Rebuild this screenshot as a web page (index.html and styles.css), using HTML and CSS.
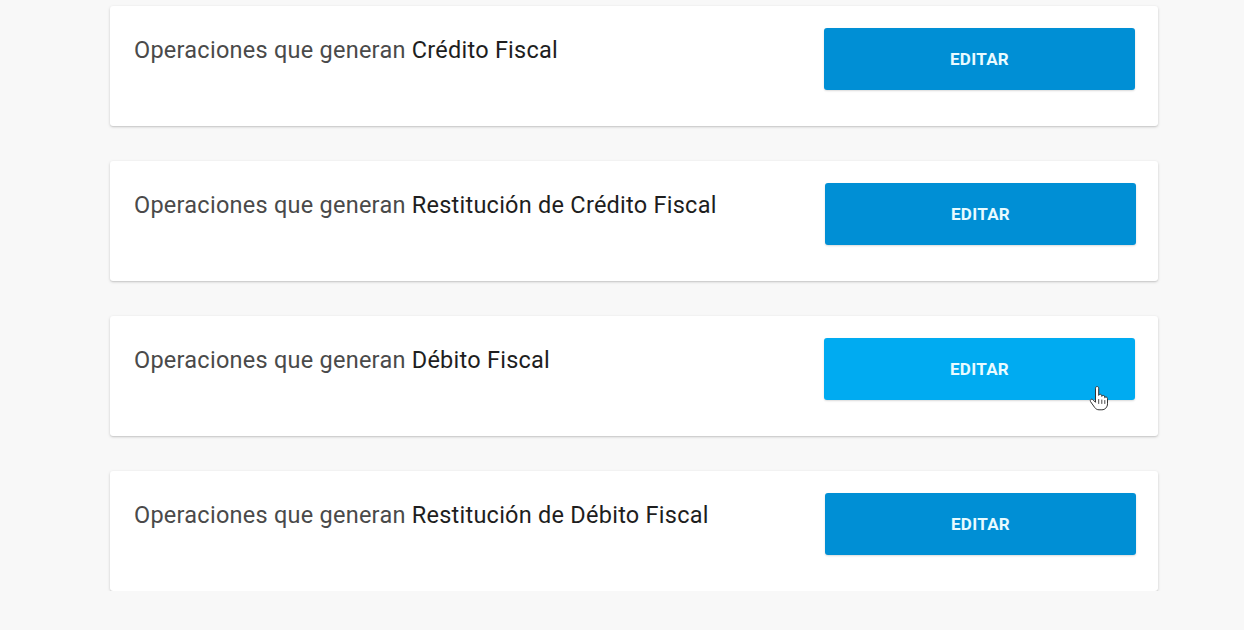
FILE: index.html
```html
<!DOCTYPE html>
<html lang="es">
<head>
<meta charset="utf-8">
<title>Operaciones</title>
<link rel="stylesheet" href="styles.css">
</head>
<body>
<main class="list">
  <section class="card">
    <p class="label">Operaciones que generan <span class="strong">Crédito Fiscal</span></p>
    <button class="btn">EDITAR</button>
  </section>
  <section class="card">
    <p class="label">Operaciones que generan <span class="strong">Restitución de Crédito Fiscal</span></p>
    <button class="btn btn-alt">EDITAR</button>
  </section>
  <section class="card">
    <p class="label">Operaciones que generan <span class="strong">Débito Fiscal</span></p>
    <button class="btn btn-hover">EDITAR
      <svg class="cursor" width="22" height="26" viewBox="0 0 22 26">
        <path d="M6.5 2.2c0-1 .7-1.7 1.6-1.7s1.6.7 1.6 1.7v7.2c.3-.8 1-1.2 1.7-1.1.8.1 1.4.7 1.4 1.5v.6c.3-.7.9-1.1 1.6-1 .8.1 1.3.7 1.3 1.5v.8c.3-.5.9-.8 1.5-.7.8.1 1.3.8 1.3 1.6v5.2c0 3.300-2.4 6-5.6 6H10c-1.8 0-3.2-.8-4.3-2.3L1.6 15.7c-.5-.7-.4-1.6.2-2.1.6-.5 1.5-.5 2.1.1l2.6 2.6V2.2z" fill="#fff" stroke="#333" stroke-width="1" stroke-linejoin="round"/>
        <path d="M9.7 13.5v4M12.8 14v3.5M15.8 14.5v3" stroke="#333" stroke-width="0.9" stroke-linecap="round"/>
      </svg>
    </button>
  </section>
  <section class="card">
    <p class="label">Operaciones que generan <span class="strong">Restitución de Débito Fiscal</span></p>
    <button class="btn btn-alt">EDITAR</button>
  </section>
</main>
</body>
</html>
```

FILE: styles.css
```css
html, body {
  margin: 0;
  padding: 0;
  background: #f8f8f8;
}

body {
  font-family: Roboto, "Liberation Sans", Arial, sans-serif;
}

.list {
  width: 1048px;
  margin-left: 110px;
  padding-top: 6px;
  display: flex;
  flex-direction: column;
  gap: 35px;
}

.card {
  box-sizing: border-box;
  height: 120px;
  background: #ffffff;
  border-radius: 3px;
  box-shadow: 0 1px 3px rgba(0, 0, 0, 0.18), 0 1px 1px rgba(0, 0, 0, 0.06);
  display: flex;
  justify-content: space-between;
  align-items: flex-start;
  padding: 22px 23px 0 24px;
}

.label {
  margin: 8px 0 0 0;
  font-size: 23.5px;
  line-height: 28px;
  color: #4a4a4a;
  letter-spacing: 0.25px;
}

.strong {
  color: #1e1e1e;
}

.btn {
  position: relative;
  width: 311px;
  height: 62px;
  border: none;
  border-radius: 3px;
  background: #008fd5;
  color: #e9fbff;
  font-family: Roboto, "Liberation Sans", Arial, sans-serif;
  font-weight: 700;
  font-size: 17px;
  letter-spacing: 0.3px;
  box-shadow: 0 1px 2px rgba(0, 0, 0, 0.15);
  padding: 0;
}

.btn-alt {
  margin-right: -1px;
}

.btn-hover {
  background: #00abf1;
}

.cursor {
  position: absolute;
  left: 265px;
  top: 48px;
}
```
